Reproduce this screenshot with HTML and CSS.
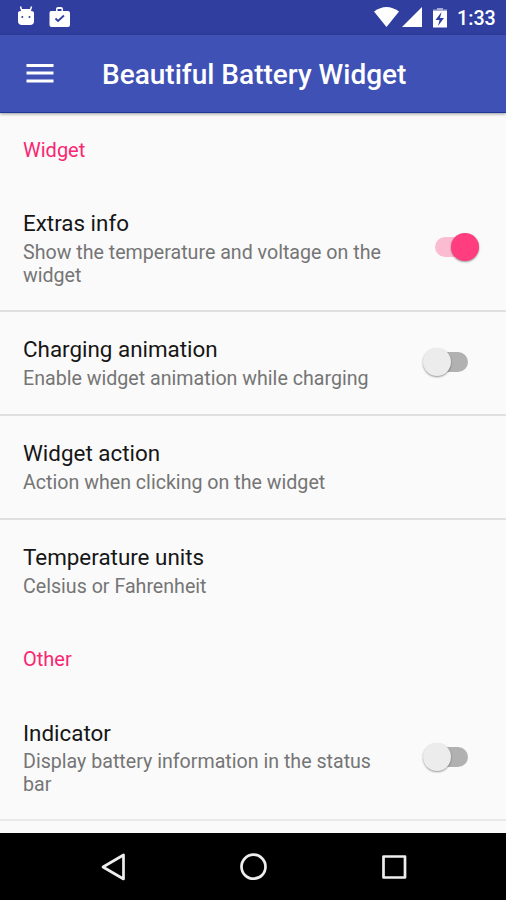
FILE: index.html
```html
<!DOCTYPE html>
<html lang="en"><head><meta charset="utf-8"><title>Beautiful Battery Widget</title><link rel="stylesheet" href="styles.css"></head>
<body>
<div class="status">
<svg class="left-icons" width="80" height="34" viewBox="0 0 80 34" fill="#fff"><path d="M18 13q0-2 3-2h10q3 0 3 2v8q0 4-4 4h-8q-4 0-4-4z"/><path d="M20.500 6.500l1.500 5M31.500 6.500l-1.500 5" stroke="#fff" stroke-width="1.500"/><path d="M21 9h10v3h-10z"/><circle cx="22.300" cy="17" r="1" fill="#303f9f"/><circle cx="29.500" cy="17" r="1" fill="#303f9f"/><path fill-rule="evenodd" d="M51 11h5V9q0-2 2-2h3q2 0 2 2v2h5q2 0 2 2v12q0 2-2 2H51.500q-2 0-2-2V13q0-2 1.500-2zM57.500 9v2h4V9z"/><path d="M55.500 18.500l2.500 2.500 6-5.500" fill="none" stroke="#303f9f" stroke-width="1.800"/></svg>
<svg class="right-icons" width="76" height="34" viewBox="374 0 76 34" fill="#fff"><path d="M374 11.500q12.500-9 25 0L386.500 27z"/><path d="M422 7v20h-20z"/><path d="M433 11h14v16.500h-14z"/><path d="M433 11V9.500h4V8h6v1.500h4V11z" fill="#a4abd5"/><path d="M441.500 12l-6 8h4l-1.500 6 6-8h-4z" fill="#303f9f"/></svg>
<span class="time">1:33</span></div>
<header class="bar"><svg width="28" height="22" viewBox="0 0 28 22"><path d="M.500 2.500h27M.500 10h27M.500 18h27" stroke="#fff" stroke-width="3"/></svg><h1>Beautiful Battery Widget</h1></header>
<main>
<h2 class="first">Widget</h2>
<section class="row tall"><div><h3>Extras info</h3><p>Show the temperature and voltage on the<br>widget</p></div><span class="switch on"></span></section>
<section class="row ruled"><div><h3>Charging animation</h3><p>Enable widget animation while charging</p></div><span class="switch short"></span></section>
<section class="row ruled"><div><h3>Widget action</h3><p>Action when clicking on the widget</p></div></section>
<section class="row ruled"><div><h3>Temperature units</h3><p>Celsius or Fahrenheit</p></div></section>
<h2 class="other">Other</h2>
<section class="row tall second"><div><h3>Indicator</h3><p>Display battery information in the status<br>bar</p></div><span class="switch"></span></section>
<div class="end"></div>
</main>
<nav><svg width="506" height="67" viewBox="0 833 506 67" fill="none" stroke="#eee" stroke-width="2.700"><path d="M123.500 855v24L103 867z" stroke-linejoin="round"/><circle cx="253.500" cy="866.700" r="12"/><path d="M383.500 856.500h21.500v21h-21.500z" stroke-linejoin="round"/></svg></nav>
</body></html>
```
FILE: styles.css
```css
*{box-sizing:border-box}
body{margin:0;width:506px;height:900px;overflow:hidden;background:#fafafa;font-family:Roboto,sans-serif;display:flex;flex-direction:column}
h1,h2,h3,p{margin:0}
svg{display:block;flex:none}
.status{height:35px;flex:none;background:#303f9f;display:flex;color:#fff}
.right-icons{margin-left:294px}
.time{margin-left:7px;font-size:19.700px;line-height:37px;font-weight:500}
.bar{height:78px;flex:none;background:#3f51b5;border-bottom:1px solid #1e3799;display:flex;align-items:center;padding-left:26px;box-shadow:0 1px 3px #0006;position:relative}
h1{margin-left:48px;color:#fff;font-size:28px;font-weight:500;line-height:76px;padding-top:2px;white-space:nowrap}
main{height:720px;flex:none;overflow:hidden}
h2{color:#f92672;font-size:20px;font-weight:400;line-height:24px;padding-left:23px}
.first{padding-top:25px;height:73px}
.row{height:104px;padding:23px 27px 0 23px;display:flex;justify-content:space-between}
.ruled{border-top:2px solid #e0e0e0}
.tall{height:124px}
.row h3{font-size:22.400px;font-weight:400;line-height:28px;color:#161616;white-space:nowrap}
.row p{font-size:19.640px;line-height:23px;color:#757575;margin-top:4px;white-space:nowrap}
.other{padding-top:25px;height:74px}
.second{height:123px}
.row.second p{margin-top:3px}
.end{height:13px;border-top:2px solid #e8e8e8}
.switch{width:46px;height:30px;flex:none;position:relative;margin:23px 10px 0 0}
.switch::before{content:"";position:absolute;left:4px;top:5px;width:41px;height:20px;border-radius:10px;background:#b1b1b1}
.switch::after{content:"";position:absolute;left:0;top:1px;width:28px;height:28px;border-radius:50%;background:#ececec;box-shadow:0 1px 2px #0006}
.short{margin-top:12px}
.on{margin-right:-1px}
.switch.on::before{left:1px;background:#fbbcd1}
.switch.on::after{left:17px;background:#ff3d7f}
nav{height:67px;background:#000;flex:none}
```
